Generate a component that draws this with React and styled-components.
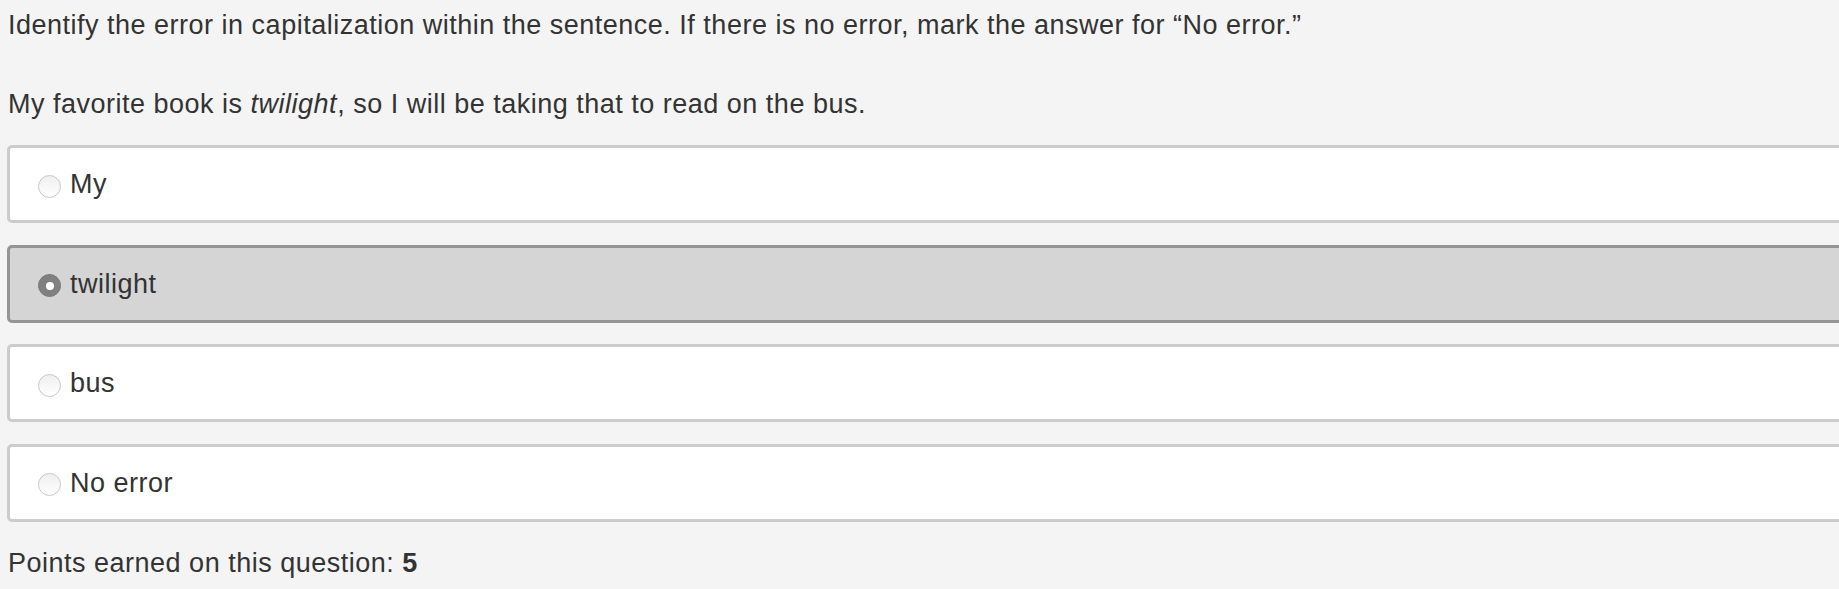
import React from "react";
import styled, { createGlobalStyle } from "styled-components";

const Global = createGlobalStyle`
  html, body {
    margin: 0;
    padding: 0;
    background: #f4f4f4;
    overflow: hidden;
  }
  body {
    font-family: "Liberation Sans", Arial, Helvetica, sans-serif;
    color: #333333;
  }
`;

const Page = styled.div`
  padding: 8px 0 0 7px;
  width: calc(100% + 40px);
  box-sizing: border-box;
`;

const Text = styled.p`
  margin: ${(p) => p.$mt || 0}px 0 0;
  font-size: 27px;
  letter-spacing: 0.5px;
  line-height: 34px;
  padding-left: 1px;
`;

const Options = styled.div`
  margin-top: 24px;
  display: flex;
  flex-direction: column;
  gap: 21.6px;
`;

const Option = styled.label`
  display: flex;
  align-items: center;
  height: 78px;
  box-sizing: border-box;
  border: 3px solid ${(p) => (p.$selected ? "#959595" : "#cccccc")};
  border-radius: 5px;
  background: ${(p) => (p.$selected ? "#d5d5d5" : "#ffffff")};
  padding-left: 28px;
  font-size: 27px;
  letter-spacing: 0.5px;
  cursor: pointer;
`;

const Radio = styled.span`
  position: relative;
  flex: none;
  width: 23px;
  height: 23px;
  box-sizing: border-box;
  border-radius: 50%;
  margin-top: 4px;
  margin-right: 9px;
  ${(p) =>
    p.$checked
      ? `
    background: #808080;
    border: 1px solid #7a7a7a;
    &::after {
      content: "";
      position: absolute;
      left: 50%;
      top: 50%;
      width: 8px;
      height: 8px;
      margin: -4px 0 0 -4px;
      border-radius: 50%;
      background: #ffffff;
    }
  `
      : `
    background: linear-gradient(#efefef, #ffffff);
    border: 1px solid #c8c8c8;
  `}
`;

const Label = styled.span`
  line-height: 34px;
`;

const options = [
  { text: "My", selected: false },
  { text: "twilight", selected: true },
  { text: "bus", selected: false },
  { text: "No error", selected: false },
];

export default function App() {
  return (
    <>
      <Global />
      <Page>
        <Text>
          Identify the error in capitalization within the sentence. If there is
          no error, mark the answer for “No error.”
        </Text>
        <Text $mt={45}>
          My favorite book is <em>twilight</em>, so I will be taking that to read
          on the bus.
        </Text>
        <Options>
          {options.map((o) => (
            <Option key={o.text} $selected={o.selected}>
              <Radio $checked={o.selected} />
              <Label>{o.text}</Label>
            </Option>
          ))}
        </Options>
        <Text $mt={24}>
          Points earned on this question: <strong>5</strong>
        </Text>
      </Page>
    </>
  );
}
